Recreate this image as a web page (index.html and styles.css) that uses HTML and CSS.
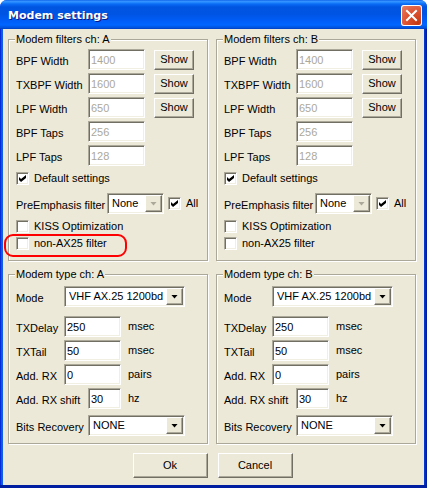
FILE: index.html
```html
<!DOCTYPE html>
<html lang="en">
<head>
<meta charset="utf-8">
<title>Modem settings</title>
<link rel="stylesheet" href="styles.css">
</head>
<body>
<main class="window">
  <header class="titlebar">
    <h1>Modem settings</h1>
    <button class="close" type="button" aria-label="Close"><svg viewBox="0 0 21 21" width="21" height="21"><path d="M6 6L15 15M15 6L6 15" stroke="#fff" stroke-width="2" stroke-linecap="square"/></svg></button>
  </header>
  <form class="client">
    <div class="channels">
      <fieldset class="filters">
        <legend>Modem filters ch: A</legend>
        <div class="row"><label for="a-bpf">BPF Width</label><input id="a-bpf" class="text" value="1400" disabled><button type="button" class="button show">Show</button></div>
        <div class="row"><label for="a-txbpf">TXBPF Width</label><input id="a-txbpf" class="text" value="1600" disabled><button type="button" class="button show">Show</button></div>
        <div class="row"><label for="a-lpf">LPF Width</label><input id="a-lpf" class="text" value="650" disabled><button type="button" class="button show">Show</button></div>
        <div class="row"><label for="a-bpft">BPF Taps</label><input id="a-bpft" class="text" value="256" disabled></div>
        <div class="row"><label for="a-lpft">LPF Taps</label><input id="a-lpft" class="text" value="128" disabled></div>
        <label class="check default"><input type="checkbox" checked>Default settings</label>
        <div class="emphasis"><label for="a-pre">PreEmphasis filter</label><span class="combo inactive"><select id="a-pre"><option>None</option></select><i class="arrow"></i></span><label class="check"><input type="checkbox" checked>All</label></div>
        <label class="check"><input type="checkbox">KISS Optimization</label>
        <label class="check marked"><input type="checkbox">non-AX25 filter</label>
      </fieldset>
      <fieldset class="filters">
        <legend>Modem filters ch: B</legend>
        <div class="row"><label for="b-bpf">BPF Width</label><input id="b-bpf" class="text" value="1400" disabled><button type="button" class="button show">Show</button></div>
        <div class="row"><label for="b-txbpf">TXBPF Width</label><input id="b-txbpf" class="text" value="1600" disabled><button type="button" class="button show">Show</button></div>
        <div class="row"><label for="b-lpf">LPF Width</label><input id="b-lpf" class="text" value="650" disabled><button type="button" class="button show">Show</button></div>
        <div class="row"><label for="b-bpft">BPF Taps</label><input id="b-bpft" class="text" value="256" disabled></div>
        <div class="row"><label for="b-lpft">LPF Taps</label><input id="b-lpft" class="text" value="128" disabled></div>
        <label class="check default"><input type="checkbox" checked>Default settings</label>
        <div class="emphasis"><label for="b-pre">PreEmphasis filter</label><span class="combo inactive"><select id="b-pre"><option>None</option></select><i class="arrow"></i></span><label class="check"><input type="checkbox" checked>All</label></div>
        <label class="check"><input type="checkbox">KISS Optimization</label>
        <label class="check"><input type="checkbox">non-AX25 filter</label>
      </fieldset>
      <fieldset class="type">
        <legend>Modem type ch: A</legend>
        <div class="row mode"><label for="a-mode">Mode</label><span class="combo"><select id="a-mode"><option>VHF AX.25 1200bd</option></select><i class="arrow"></i></span></div>
        <div class="row"><label for="a-delay">TXDelay</label><input id="a-delay" class="text" value="250"><span class="unit">msec</span></div>
        <div class="row"><label for="a-tail">TXTail</label><input id="a-tail" class="text" value="50"><span class="unit">msec</span></div>
        <div class="row"><label for="a-rx">Add. RX</label><input id="a-rx" class="text" value="0"><span class="unit">pairs</span></div>
        <div class="row wide"><label for="a-shift">Add. RX shift</label><input id="a-shift" class="text" value="30"><span class="unit">hz</span></div>
        <div class="row wide recovery"><label for="a-bits">Bits Recovery</label><span class="combo"><select id="a-bits"><option>NONE</option></select><i class="arrow"></i></span></div>
      </fieldset>
      <fieldset class="type">
        <legend>Modem type ch: B</legend>
        <div class="row mode"><label for="b-mode">Mode</label><span class="combo"><select id="b-mode"><option>VHF AX.25 1200bd</option></select><i class="arrow"></i></span></div>
        <div class="row"><label for="b-delay">TXDelay</label><input id="b-delay" class="text" value="250"><span class="unit">msec</span></div>
        <div class="row"><label for="b-tail">TXTail</label><input id="b-tail" class="text" value="50"><span class="unit">msec</span></div>
        <div class="row"><label for="b-rx">Add. RX</label><input id="b-rx" class="text" value="0"><span class="unit">pairs</span></div>
        <div class="row wide"><label for="b-shift">Add. RX shift</label><input id="b-shift" class="text" value="30"><span class="unit">hz</span></div>
        <div class="row wide recovery"><label for="b-bits">Bits Recovery</label><span class="combo"><select id="b-bits"><option>NONE</option></select><i class="arrow"></i></span></div>
      </fieldset>
    </div>
    <footer class="actions">
      <button type="button" class="button">Ok</button>
      <button type="button" class="button">Cancel</button>
    </footer>
  </form>
</main>
</body>
</html>
```
FILE: styles.css
```css
* { box-sizing: border-box; }
body { margin: 0; background: #fff; }
body, input, select, button {
  font: 11px/13px "Liberation Sans", Arial, sans-serif;
  color: #000;
}
.window {
  display: flex;
  flex-direction: column;
  min-height: 100vh;
  padding: 0 3px;
  overflow: hidden;
  border-bottom: 3px solid #001ea0;
  border-radius: 7px 7px 0 0;
  background: #0831d9;
  background: linear-gradient(90deg, #0019cf, #166aee 2px, #0855dd 3px, #0855dd calc(100% - 3px), #0441d8 calc(100% - 3px), #001590);
}
.titlebar {
  display: flex;
  align-items: center;
  justify-content: space-between;
  height: 29px;
  margin: 0 -3px;
  padding: 2px 5px 0 8px;
  background: linear-gradient(#0058e6 0, #3a93ff 1px, #2b90ff 2px, #0a6cf5 4px, #0055e0 7px, #0054e3 14px, #005cf5 20px, #0066ff 25px, #0050d8 28px, #003dbd 29px);
}
h1 {
  margin: 0;
  font: bold 11px/14px "DejaVu Sans", sans-serif;
  color: #fff;
  text-shadow: 1px 1px #0a1883;
}
.close {
  width: 21px;
  height: 21px;
  padding: 0;
  border: 0;
  border-radius: 3px;
  box-shadow: inset 0 0 0 1px #fff;
  background: radial-gradient(circle at 80% 85%, #c63a10, #dd5433 50%, #e8866c);
}
.close svg { display: block; }
.client {
  flex: 1;
  padding: 4px 7px 6px 5px;
  background: #ece9d8;
}
.channels {
  display: grid;
  grid-template-columns: 1fr 1fr;
  gap: 6px 7px;
}
fieldset {
  min-width: 0;
  margin: 0 1px 1px 0;
  padding: 5px 6px 7px 7px;
  border: 1px solid #aca899;
  box-shadow: 1px 1px #fff, inset 1px 1px #fff;
}
.filters { padding-top: 3px; padding-bottom: 8px; }
legend {
  padding: 0 1px;
  margin-left: -1px;
  background: #ece9d8;
}
.row {
  display: grid;
  grid-template-columns: 72px 57px 40px;
  column-gap: 0;
  align-items: center;
  height: 21px;
  margin-bottom: 3px;
  white-space: nowrap;
}
.row > label, .emphasis > label:first-child { padding-top: 3px; }
.type .row { grid-template-columns: 48px 57px 1fr; }
.type .wide { grid-template-columns: 72px 33px 1fr; }
.type .mode { grid-template-columns: 48px 121px; margin-bottom: 9px; }
.type .recovery { grid-template-columns: 72px 97px; margin: 6px 0 0; }
.unit { padding-left: 7px; }
.text, .combo {
  width: 100%;
  height: 21px;
  border: 1px solid;
  border-color: #aca899 #fff #fff #aca899;
  box-shadow: inset 1px 1px #716f64, inset -1px -1px #f1efe2;
  background: #fff;
}
.text { padding: 0 2px; border-radius: 0; outline: 0; }
.text:disabled { color: #aca899; }
.combo { display: flex; padding: 1px; }
.combo select {
  flex: 1;
  min-width: 0;
  padding: 0 0 0 3px;
  border: 0;
  background: none;
  appearance: none;
}
.arrow, .button {
  border: 1px solid;
  border-color: #fff #716f64 #716f64 #fff;
  box-shadow: inset -1px -1px #aca899;
  background: #ece9d8;
}
.arrow {
  display: grid;
  place-items: center;
  width: 17px;
  pointer-events: none;
}
.arrow::before {
  content: "";
  width: 7px;
  height: 4px;
  background: #000;
  clip-path: polygon(0 0, 100% 0, 50% 100%);
}
.inactive .arrow::before { background: #aca899; }
.button { padding: 0; border-radius: 0; }
.show { width: 40px; height: 20px; margin-left: 9px; }
.check {
  display: flex;
  align-items: center;
  gap: 5px;
  height: 17px;
}
.check input {
  display: grid;
  place-items: center;
  width: 13px;
  height: 13px;
  margin: 0;
  appearance: none;
  border: 1px solid;
  border-color: #aca899 #fff #fff #aca899;
  box-shadow: inset 1px 1px #716f64, inset -1px -1px #f1efe2;
  background: #fff;
}
.check input:checked::before {
  content: "";
  width: 7px;
  height: 7px;
  background: #000;
  clip-path: polygon(0 29%, 29% 57%, 100% 0, 100% 43%, 29% 100%, 0 71%);
}
.default { margin: 4px 0 6px; }
.emphasis {
  display: grid;
  grid-template-columns: 91px 57px 1fr;
  align-items: center;
  margin-bottom: 4px;
  white-space: nowrap;
}
.emphasis .check { padding-left: 4px; }
.marked { position: relative; }
.marked::after {
  content: "";
  position: absolute;
  inset: -1px auto 0 -12px;
  width: 119px;
  height: 19px;
  border: 2px solid #f00;
  border-radius: 9px;
  pointer-events: none;
}
.actions {
  display: flex;
  justify-content: center;
  gap: 10px;
  padding-top: 8px;
}
.actions .button { width: 75px; height: 25px; }
```
